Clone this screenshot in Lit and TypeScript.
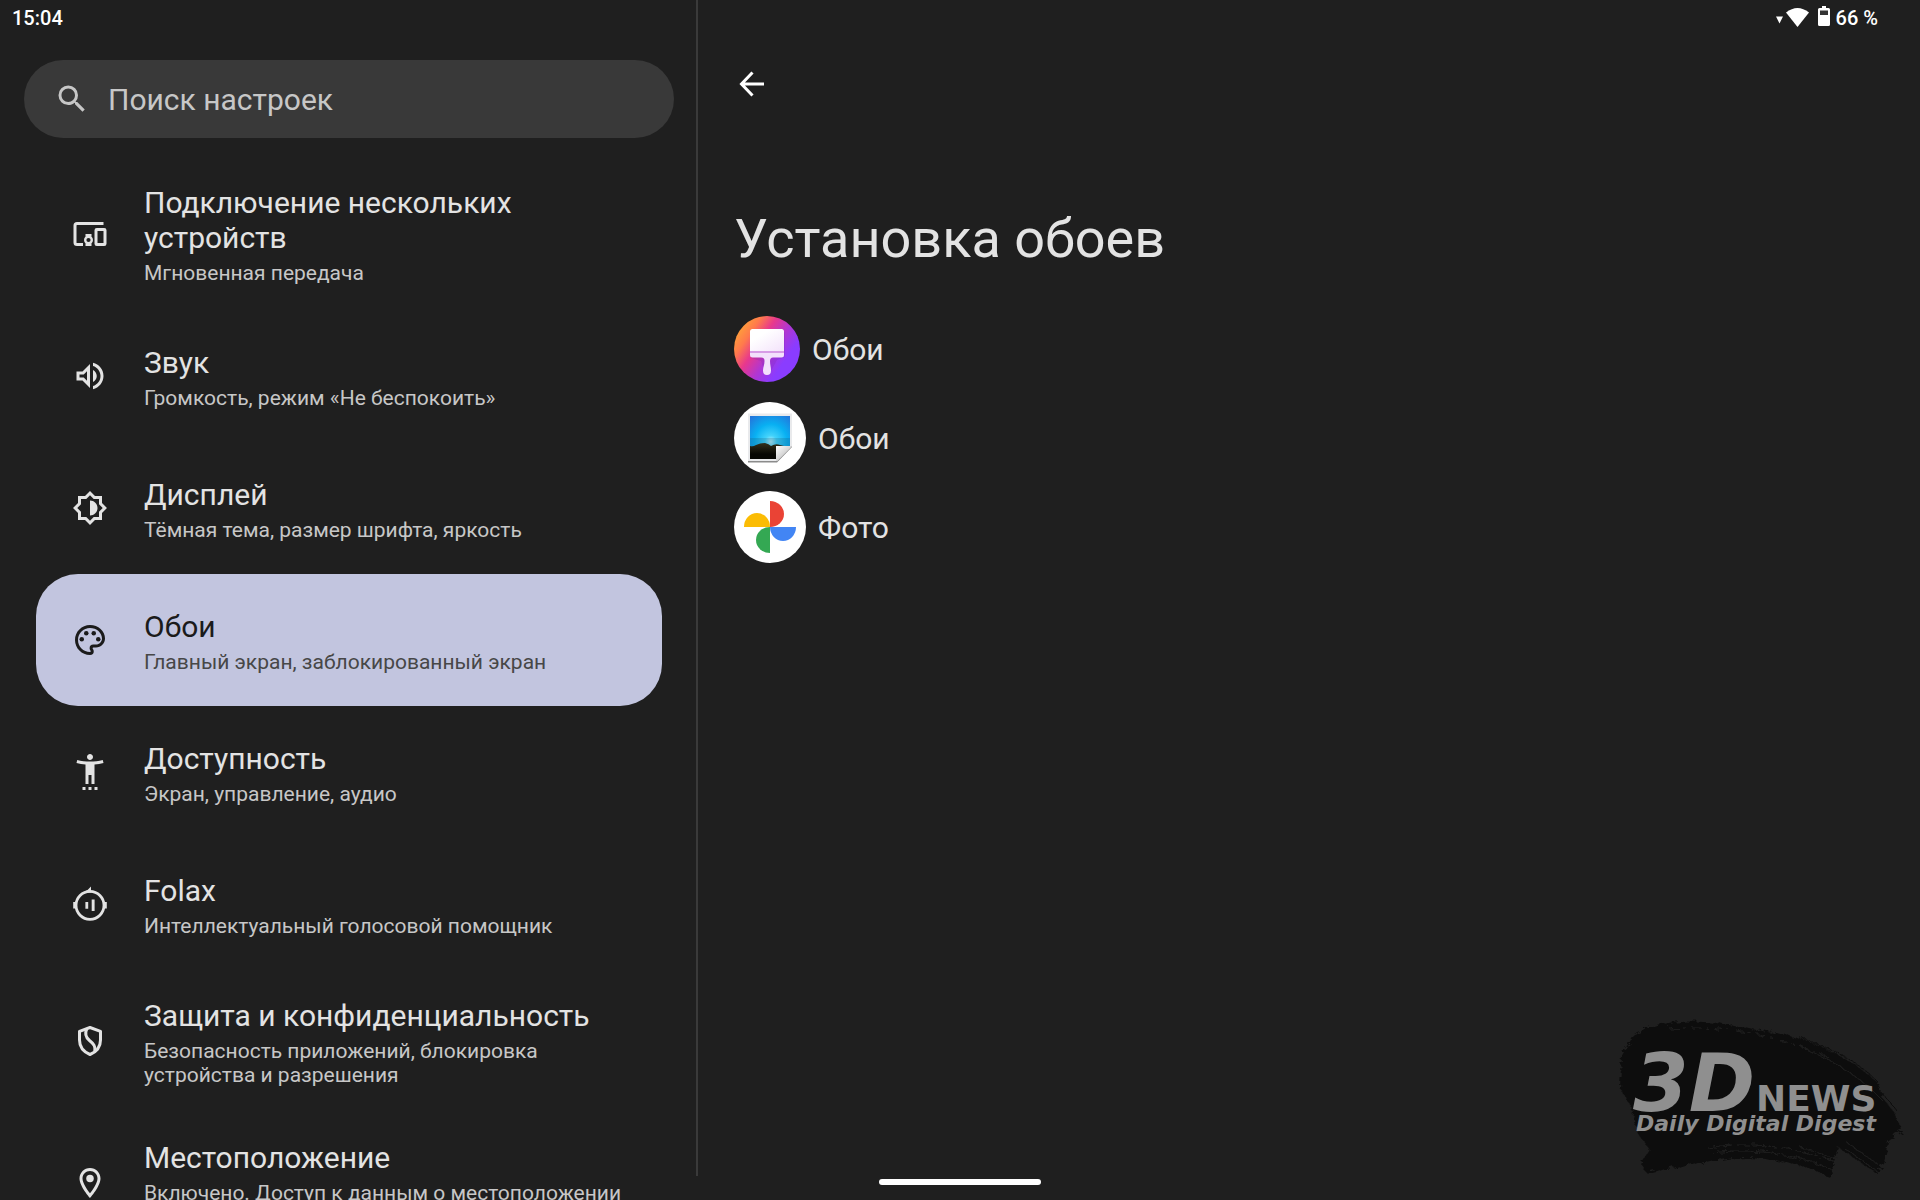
import { LitElement, html, css, svg, SVGTemplateResult } from "lit";
import { customElement, property, state } from "lit/decorators.js";
import { classMap } from "lit/directives/class-map.js";

interface Entry {
  icon: string;
  title: string;
  summary: string;
  tall?: boolean;
}

const entries: Entry[] = [
  { icon: "devices", title: "Подключение нескольких устройств", summary: "Мгновенная передача" },
  { icon: "sound", title: "Звук", summary: "Громкость, режим «Не беспокоить»" },
  { icon: "display", title: "Дисплей", summary: "Тёмная тема, размер шрифта, яркость" },
  { icon: "palette", title: "Обои", summary: "Главный экран, заблокированный экран" },
  { icon: "access", title: "Доступность", summary: "Экран, управление, аудио" },
  { icon: "folax", title: "Folax", summary: "Интеллектуальный голосовой помощник" },
  { icon: "shield", title: "Защита и конфиденциальность", summary: "Безопасность приложений, блокировка устройства и разрешения" },
  { icon: "location", title: "Местоположение", summary: "Включено. Доступ к данным о местоположении", tall: true },
];

/* All glyphs share a 36-unit grid; Material shapes are scaled up from 24. */
const glyphs: Record<string, SVGTemplateResult> = {
  devices: svg`
    <path fill="none" stroke="currentColor" stroke-width="3" d="M31.5 7.5H5Q3 7.5 3 9.5V26.5Q3 28.500 5 28.500H11"/>
    <rect x="24" y="13.500" width="9" height="15" rx="0.800" fill="none" stroke="currentColor" stroke-width="3"/>
    <path fill="currentColor" d="M13.500 18h6v2.500h-6zM13.500 27.500h6V30h-6z"/>
    <circle cx="16.500" cy="24" r="3.300" fill="none" stroke="currentColor" stroke-width="2.400"/>`,
  sound: svg`<path transform="scale(1.5)" fill="currentColor" d="M3 9v6h4l5 5V4L7 9H3zm7-.17v6.34L7.83 13H5v-2h2.83L10 8.83zM16.5 12c0-1.77-1.02-3.29-2.500-4.030v8.050c1.480-.730 2.500-2.250 2.500-4.020zM14 3.230v2.060c2.890.860 5 3.540 5 6.710s-2.110 5.850-5 6.710v2.060c4.010-.910 7-4.490 7-8.770s-2.990-7.860-7-8.770z"/>`,
  display: svg`<path transform="scale(1.5)" fill="currentColor" fill-rule="evenodd" d="M20 8.690V4h-4.690L12 .690 8.690 4H4v4.690L.690 12 4 15.310V20h4.690L12 23.310 15.310 20H20v-4.690L23.310 12 20 8.690zM18 14.480V18h-3.520L12 20.480 9.520 18H6v-3.520L3.520 12 6 9.520V6h3.520L12 3.520 14.480 6H18v3.520L20.480 12 18 14.480zM12 7v10c2.760 0 5-2.240 5-5s-2.240-5-5-5z"/>`,
  palette: svg`<g transform="scale(1.5)" fill="currentColor"><path d="M12 22C6.490 22 2 17.510 2 12S6.490 2 12 2s10 4.040 10 9c0 3.310-2.690 6-6 6h-1.770c-.280 0-.500.220-.500.500 0 .120.050.230.130.330.410.470.640 1.060.640 1.670A2.500 2.500 0 0 1 12 22zm0-18c-4.410 0-8 3.590-8 8s3.590 8 8 8c.280 0 .500-.220.500-.500a.540.540 0 0 0-.140-.350c-.410-.460-.630-1.050-.630-1.650a2.500 2.500 0 0 1 2.500-2.500H16c2.210 0 4-1.790 4-4 0-3.860-3.590-7-8-7z"/><circle cx="6.500" cy="11.500" r="1.500"/><circle cx="9.500" cy="7.500" r="1.500"/><circle cx="14.500" cy="7.500" r="1.500"/><circle cx="17.500" cy="11.500" r="1.500"/></g>`,
  access: svg`<path transform="scale(1.5)" fill="currentColor" d="M20.500 4c-2.610.700-5.670 1-8.500 1s-5.890-.300-8.500-1L3 6c1.860.500 4 .830 6 1v13h2v-6h2v6h2V7c2-.170 4.140-.500 6-1l-.500-2zM12 4c1.100 0 2-.900 2-2s-.900-2-2-2-2 .900-2 2 .900 2 2 2zM7 24h2v-2H7v2zm4 0h2v-2h-2v2zm4 0h2v-2h-2v2z"/>`,
  folax: svg`
    <circle cx="18" cy="19.300" r="14" fill="none" stroke="currentColor" stroke-width="2.800"/>
    <path fill="currentColor" d="M11.500 6.500Q16 4.500 19 .600V6.500zM1.200 16h3v6.600h-3zM31.800 16h3v6.600h-3zM13.400 16h2.800v6.800h-2.800zM19.700 13.600h2.900V25h-2.900z"/>`,
  shield: svg`<g fill="none" stroke="currentColor" stroke-width="3" stroke-linejoin="round"><path d="M18 4.500L28.500 8.300V17C28.500 24 24.500 28.800 18 31.500C11.500 28.800 7.500 24 7.500 17V8.300Z"/><path d="M14.800 5.800C12.300 11 13.800 14.300 17.500 17.500C21.500 20.800 23.800 23 22.800 28.300"/></g>`,
  location: svg`<g transform="scale(1.5)" fill="currentColor"><path d="M12 2C8.130 2 5 5.130 5 9c0 5.250 7 13 7 13s7-7.750 7-13c0-3.870-3.130-7-7-7zM7 9c0-2.760 2.240-5 5-5s5 2.240 5 5c0 2.880-2.880 7.190-5 9.880C9.920 16.210 7 11.850 7 9z"/><circle cx="12" cy="9" r="2.500"/></g>`,
  search: svg`<path transform="scale(1.5)" fill="currentColor" d="M15.500 14h-.790l-.280-.270A6.471 6.471 0 0 0 16 9.500 6.500 6.500 0 1 0 9.500 16c1.610 0 3.090-.590 4.230-1.570l.270.280v.790l5 4.990L20.490 19l-4.990-5zm-6 0C7.010 14 5 11.990 5 9.500S7.010 5 9.500 5 14 7.010 14 9.500 11.990 14 9.500 14z"/>`,
  back: svg`<path fill="none" stroke="currentColor" stroke-width="3" d="M30 18H8M18.500 6.500L7.500 18L18.500 29.500"/>`,
};

@customElement("settings-icon")
class SettingsIcon extends LitElement {
  @property() name = "";

  static styles = css`
    :host {
      display: block;
      flex: none;
      width: 36px;
      height: 36px;
    }
    .glyph {
      display: block;
      width: 100%;
      height: 100%;
    }
  `;

  render() {
    return html`<svg class="glyph" viewBox="0 0 36 36" aria-hidden="true">${glyphs[this.name]}</svg>`;
  }
}

@customElement("app-badge")
class AppBadge extends LitElement {
  @property() kind = "";

  static styles = css`
    :host {
      display: block;
      flex: none;
    }
    .art {
      display: block;
      width: 72px;
      height: 72px;
    }
    .small {
      width: 66px;
      height: 66px;
    }
  `;

  render() {
    if (this.kind === "brush") {
      return html`<svg class="art small" viewBox="0 0 66 66" aria-hidden="true">
        <defs>
          <linearGradient id="base" x1="0.100" y1="0.200" x2="0.900" y2="0.750">
            <stop offset="0" stop-color="#ff9a3c" />
            <stop offset="0.160" stop-color="#ff7a4c" />
            <stop offset="0.360" stop-color="#e8388c" />
            <stop offset="0.600" stop-color="#b136d2" />
            <stop offset="0.850" stop-color="#8a3cff" />
          </linearGradient>
          <linearGradient id="pad" x1="0" y1="0" x2="1" y2="1">
            <stop offset="0.300" stop-color="#ffffff" />
            <stop offset="1" stop-color="#f3e2fb" />
          </linearGradient>
        </defs>
        <circle cx="33" cy="33" r="33" fill="url(#base)" />
        <path d="M18 14H48Q51 15 51 18V41L43 44L36 57H31L27 45L17 42Z" fill="#6b1fa8" opacity="0.180" />
        <path d="M18.500 13H47.500Q50 13 50 15.500V35H16V15.500Q16 13 18.500 13Z" fill="url(#pad)" />
        <path d="M16 35H50V37H16Z" fill="#d79be6" />
        <path d="M16 37H50V39Q50 41.500 47.500 41.500H39Q36 41.500 36 45C36 49 37 51 37 54.500Q37 59 33 59Q29 59 29 54.500C29 51 30.500 49 30.500 45Q30.500 41.500 27 41.500H18.500Q16 41.500 16 39Z" fill="#f3e0fc" />
      </svg>`;
    }
    if (this.kind === "picture") {
      return html`<svg class="art" viewBox="0 0 72 72" aria-hidden="true">
        <defs>
          <radialGradient id="sky" cx="0.520" cy="0.600" r="0.750">
            <stop offset="0" stop-color="#bdf4ff" />
            <stop offset="0.200" stop-color="#42d2fb" />
            <stop offset="0.550" stop-color="#08b0f2" />
            <stop offset="1" stop-color="#2377dc" />
          </radialGradient>
          <linearGradient id="hill" x1="0" y1="0" x2="0" y2="1">
            <stop offset="0" stop-color="#33301c" />
            <stop offset="0.700" stop-color="#070703" />
          </linearGradient>
          <linearGradient id="fold" x1="0" y1="0" x2="1" y2="1">
            <stop offset="0" stop-color="#ffffff" />
            <stop offset="0.500" stop-color="#d5d5d5" />
          </linearGradient>
        </defs>
        <circle cx="36" cy="36" r="36" fill="#ffffff" />
        <path d="M14 12H58V45L43 60.500H14Z" fill="#8b8b8b" />
        <path d="M14 11.500H58V44L43 59H14Z" fill="#e9eaec" />
        <path d="M16 14H56V44H42V57H16Z" fill="url(#sky)" />
        <path d="M16 36H56V44H16Z" fill="#1a5a7a" opacity="0.250" />
        <path d="M16 44Q19 45 22 43Q27 41 31 41Q35 42 37 44Q42 41 46 43L50 44H42V57H16Z" fill="url(#hill)" />
        <path d="M42 44H58L43 59H42Z" fill="url(#fold)" />
      </svg>`;
    }
    return html`<svg class="art" viewBox="0 0 72 72" aria-hidden="true">
      <circle cx="36" cy="36" r="36" fill="#ffffff" />
      <path d="M36 10A14 13 0 0 1 36 36Z" fill="#ea4335" />
      <path d="M62 36A13 14 0 0 1 36 36Z" fill="#4285f4" />
      <path d="M36 62A14 13 0 0 1 36 36Z" fill="#34a853" />
      <path d="M10 36A13 14 0 0 1 36 36Z" fill="#fbbc04" />
    </svg>`;
  }
}

@customElement("brand-mark")
class BrandMark extends LitElement {
  static styles = css`
    :host {
      display: block;
    }
    .mark {
      display: block;
      width: 320px;
      height: 200px;
    }
    .letters {
      font-family: "DejaVu Sans", sans-serif;
      font-weight: 700;
      fill: #8f8f8f;
    }
    .big {
      font-size: 80px;
      font-style: italic;
    }
    .mid {
      font-size: 36px;
    }
    .motto {
      font-size: 22px;
      font-style: italic;
    }
  `;

  render() {
    return html`<svg class="mark" viewBox="0 0 320 200" role="img" aria-label="3DNews">
      <defs>
        <filter id="rough" x="-5%" y="-5%" width="110%" height="110%">
          <feTurbulence type="fractalNoise" baseFrequency="0.120 0.250" numOctaves="3" seed="4" />
          <feDisplacementMap in="SourceGraphic" scale="8" />
        </filter>
      </defs>
      <g filter="url(#rough)">
        <path fill="#0f0f0f" d="M46 28C66 20 110 20 134 26C168 30 196 36 220 46C244 57 262 68 279 84L284 100L294 112L302 130L288 142L284 164L276 173L238 147L230 178C214 168 180 158 146 158C110 158 76 168 46 173L41 162L50 150L38 134L32 108L20 88L21 54L34 36Z" />
        <g fill="none" stroke="#1f1f1f" stroke-width="1">
          <path d="M70 29C120 24 180 36 230 58" stroke-dasharray="9 4 3 6" />
          <path d="M205 49C235 61 262 78 282 100" />
          <path d="M108 148C150 140 200 148 236 162" stroke-dasharray="24 5 12 3" />
          <path d="M112 153C156 147 196 155 232 169" />
          <path d="M200 147L240 160" />
          <path d="M246 142L280 166" />
          <path d="M243 147L278 172" />
        </g>
        <g fill="none" stroke="#0f0f0f" stroke-width="1">
          <path d="M200 38C236 49 262 65 280 84" />
          <path d="M238 60C260 72 280 88 296 110" />
        </g>
      </g>
      <text class="letters big" x="33" y="111">3D</text>
      <text class="letters mid" x="156" y="111">NEWS</text>
      <text class="letters motto" x="36" y="131">Daily Digital Digest</text>
    </svg>`;
  }
}

@customElement("app-root")
class AppRoot extends LitElement {
  @state() private selected = 3;

  static styles = css`
    :host {
      display: block;
      background: #1f1f1f;
      color: #e3e3e3;
      font-family: Roboto, sans-serif;
    }
    .screen {
      position: relative;
      display: flex;
      height: 100vh;
      overflow: hidden;
    }
    .side {
      box-sizing: border-box;
      flex: none;
      width: 36.25%;
      overflow: hidden;
    }
    .rule {
      flex: none;
      width: 2px;
      margin-bottom: 24px;
      background: #3a3a3a;
    }
    .main {
      flex: 1;
      min-width: 0;
    }
    .status {
      display: flex;
      align-items: center;
      box-sizing: border-box;
      height: 36px;
      padding: 0 12px;
      font-size: 20px;
      font-weight: 500;
      color: #ffffff;
    }
    .status-end {
      justify-content: flex-end;
      gap: 5px;
      padding-right: 42px;
    }
    .signals {
      width: 56px;
      height: 24px;
    }
    .search {
      display: flex;
      align-items: center;
      gap: 18px;
      height: 78px;
      margin: 24px 22px 19px 24px;
      padding: 0 30px;
      box-sizing: border-box;
      border-radius: 39px;
      background: #393939;
      color: #c7c7c7;
    }
    .query {
      flex: 1;
      min-width: 0;
      padding: 0;
      border: 0;
      outline: 0;
      background: none;
      font: inherit;
      font-size: 30px;
      color: #e3e3e3;
    }
    .query::placeholder {
      color: #c7c7c7;
      opacity: 1;
    }
    .list {
      display: flex;
      flex-direction: column;
      margin: 0 34px 0 36px;
    }
    .entry {
      display: flex;
      align-items: center;
      gap: 36px;
      box-sizing: border-box;
      min-height: 132px;
      padding: 25px 24px 25px 36px;
      border-radius: 42px;
      color: #e3e3e3;
      text-decoration: none;
    }
    .texts {
      display: flex;
      flex-direction: column;
      gap: 6px;
      padding-top: 3px;
    }
    .label {
      font-size: 30px;
      line-height: 35px;
    }
    .summary {
      font-size: 21px;
      line-height: 24px;
      color: #c7c7c7;
    }
    .tall .summary {
      min-height: 48px;
    }
    .active {
      background: #c2c5df;
      color: #1b1b1b;
    }
    .active .summary {
      color: #474747;
    }
    .content {
      padding: 30px 36px;
    }
    .back {
      display: block;
      padding: 0;
      border: 0;
      background: none;
      color: #ffffff;
    }
    .heading {
      margin: 105px 0 42px;
      font-size: 54px;
      font-weight: 400;
      line-height: 64px;
    }
    .apps {
      display: flex;
      flex-direction: column;
      gap: 17px;
      margin: 0;
      padding: 0;
      list-style: none;
    }
    .app {
      display: flex;
      align-items: center;
      gap: 12px;
      height: 72px;
      padding: 0;
      border: 0;
      background: none;
      color: #e3e3e3;
      font: inherit;
      font-size: 30px;
      line-height: 35px;
    }
    .mark {
      position: absolute;
      right: 0;
      bottom: 0;
    }
    .pill {
      position: absolute;
      bottom: 15px;
      left: 50%;
      width: 162px;
      height: 6px;
      margin-left: -81px;
      border-radius: 3px;
      background: #ffffff;
    }
  `;

  private choose(event: Event, index: number) {
    event.preventDefault();
    this.selected = index;
  }

  private renderEntry(entry: Entry, index: number) {
    const active = index === this.selected;
    return html`<a
      class=${classMap({ entry: true, active, tall: !!entry.tall })}
      href="#${entry.icon}"
      aria-current=${active ? "page" : "false"}
      @click=${(event: Event) => this.choose(event, index)}
    >
      <settings-icon name=${entry.icon}></settings-icon>
      <span class="texts"><span class="label">${entry.title}</span><span class="summary">${entry.summary}</span></span>
    </a>`;
  }

  render() {
    return html`<div class="screen">
      <aside class="side">
        <div class="status"><time>15:04</time></div>
        <label class="search">
          <settings-icon name="search"></settings-icon>
          <input class="query" type="text" placeholder="Поиск настроек" aria-label="Поиск настроек" />
        </label>
        <nav class="list">${entries.map((entry, index) => this.renderEntry(entry, index))}</nav>
      </aside>
      <div class="rule"></div>
      <main class="main">
        <div class="status status-end">
          <svg class="signals" viewBox="0 0 56 24" aria-hidden="true" fill="#ffffff">
            <path d="M1 10.500H8L4.500 17.500Z" />
            <path d="M11 6.500Q22.500-2.500 34 6.500L22.500 21Z" />
            <path d="M47 0H51V2H53.500Q55 2 55 3.500V18.500Q55 20 53.500 20H44.500Q43 20 43 18.500V3.500Q43 2 44.500 2H47Z" />
            <path d="M45 4.500H53V9H45Z" fill="#333333" />
          </svg>
          <span>66 %</span>
        </div>
        <div class="content">
          <button class="back" aria-label="Назад"><settings-icon name="back"></settings-icon></button>
          <h1 class="heading">Установка обоев</h1>
          <ul class="apps">
            <li><button class="app"><app-badge kind="brush"></app-badge>Обои</button></li>
            <li><button class="app"><app-badge kind="picture"></app-badge>Обои</button></li>
            <li><button class="app"><app-badge kind="photos"></app-badge>Фото</button></li>
          </ul>
        </div>
      </main>
      <brand-mark class="mark"></brand-mark>
      <div class="pill"></div>
    </div>`;
  }
}
